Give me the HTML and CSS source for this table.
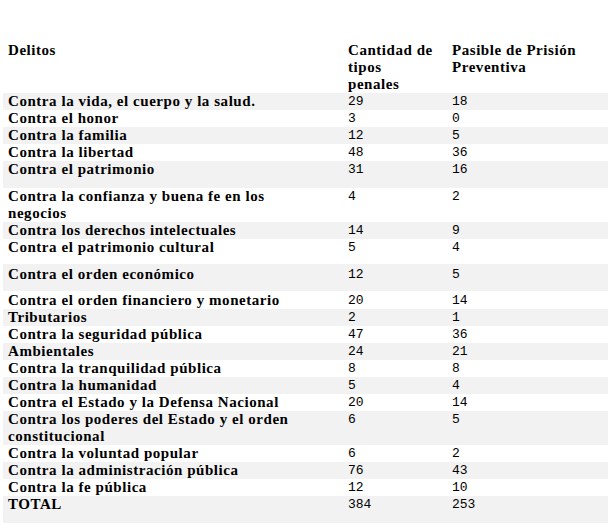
FILE: index.html
```html
<!DOCTYPE html>
<html lang="es">
<head>
<meta charset="utf-8">
<title>Delitos</title>
<link rel="stylesheet" href="styles.css">
</head>
<body>
<table class="tabla">
  <colgroup>
    <col class="c1"><col class="c2"><col class="c3">
  </colgroup>
  <thead>
    <tr class="head">
      <th>Delitos</th>
      <th class="narrow">Cantidad de tipos penales</th>
      <th>Pasible de Prisión Preventiva</th>
    </tr>
  </thead>
  <tbody>
    <tr class="g"><td>Contra la vida, el cuerpo y la salud.</td><td>29</td><td>18</td></tr>
    <tr><td>Contra el honor</td><td>3</td><td>0</td></tr>
    <tr class="g"><td>Contra la familia</td><td>12</td><td>5</td></tr>
    <tr><td>Contra la libertad</td><td>48</td><td>36</td></tr>
    <tr class="g tall"><td>Contra el patrimonio</td><td>31</td><td>16</td></tr>
    <tr><td>Contra la confianza y buena fe en los negocios</td><td>4</td><td>2</td></tr>
    <tr class="g"><td>Contra los derechos intelectuales</td><td>14</td><td>9</td></tr>
    <tr class="mid"><td>Contra el patrimonio cultural</td><td>5</td><td>4</td></tr>
    <tr class="g eco"><td>Contra el orden económico</td><td>12</td><td>5</td></tr>
    <tr class="fin"><td>Contra el orden financiero y monetario</td><td>20</td><td>14</td></tr>
    <tr class="g"><td>Tributarios</td><td>2</td><td>1</td></tr>
    <tr><td>Contra la seguridad pública</td><td>47</td><td>36</td></tr>
    <tr class="g"><td>Ambientales</td><td>24</td><td>21</td></tr>
    <tr><td>Contra la tranquilidad pública</td><td>8</td><td>8</td></tr>
    <tr class="g"><td>Contra la humanidad</td><td>5</td><td>4</td></tr>
    <tr><td>Contra el Estado y la Defensa Nacional</td><td>20</td><td>14</td></tr>
    <tr class="g"><td>Contra los poderes del Estado y el orden constitucional</td><td>6</td><td>5</td></tr>
    <tr><td>Contra la voluntad popular</td><td>6</td><td>2</td></tr>
    <tr class="g"><td>Contra la administración pública</td><td>76</td><td>43</td></tr>
    <tr><td>Contra la fe pública</td><td>12</td><td>10</td></tr>
    <tr class="g tall"><td>TOTAL</td><td>384</td><td>253</td></tr>
  </tbody>
</table>
</body>
</html>
```

FILE: styles.css
```css
html, body {
  margin: 0;
  padding: 0;
  background: #ffffff;
}

.tabla {
  border-collapse: collapse;
  margin: 42px 0 0 3px;
  width: 605px;
  table-layout: fixed;
  color: #000;
}

.c1 { width: 340px; }
.c2 { width: 104px; }
.c3 { width: 161px; }

.tabla th,
.tabla td {
  padding: 0 5px;
  vertical-align: top;
  text-align: left;
  line-height: 17px;
}

.tabla th,
.tabla td:first-child {
  font-family: "Liberation Serif", "Times New Roman", serif;
  font-weight: bold;
  font-size: 15px;
  letter-spacing: 0.55px;
}

.tabla th:first-child,
.tabla td:first-child {
  padding-right: 30px;
}

.tabla th.narrow {
  padding-right: 13px;
}

.tabla td {
  font-family: "Liberation Mono", "Courier New", monospace;
  font-size: 13px;
  font-weight: normal;
}

.tabla .g {
  background: #f2f2f2;
}

.tabla .tall td {
  padding-bottom: 10px;
}

.tabla .mid td {
  padding-bottom: 8px;
}

.tabla .eco td {
  padding-top: 2px;
  padding-bottom: 8px;
}

.tabla .fin td {
  padding-top: 1px;
}
```
